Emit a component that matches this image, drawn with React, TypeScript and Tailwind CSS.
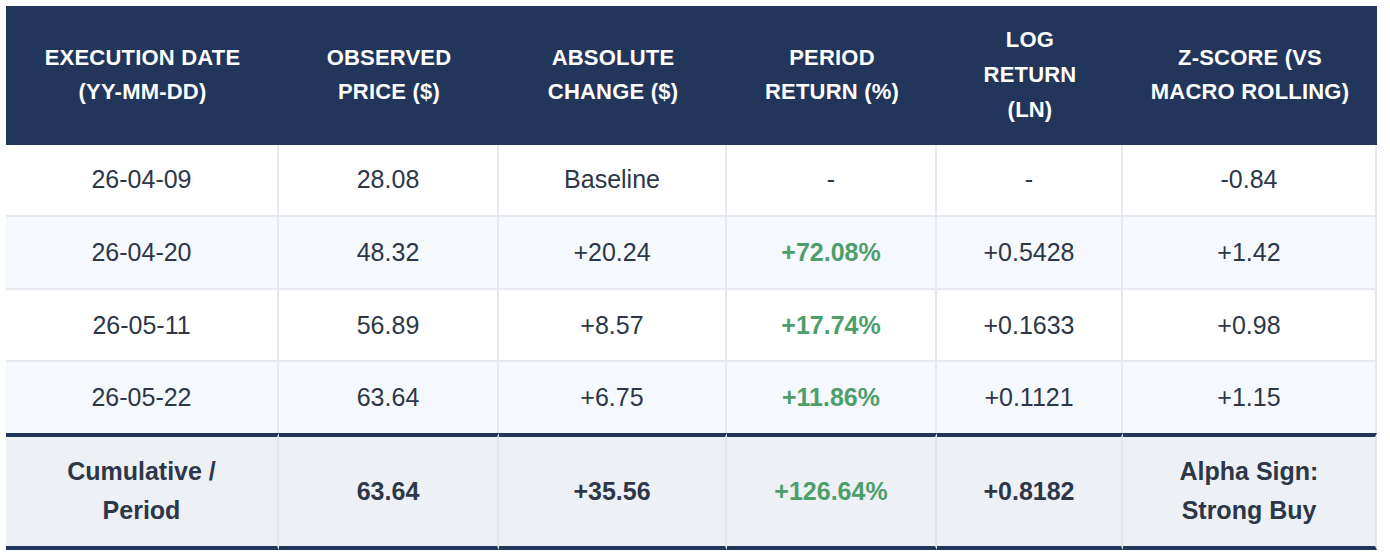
import React from "react";

const headers: string[][] = [
  ["EXECUTION DATE", "(YY-MM-DD)"],
  ["OBSERVED", "PRICE ($)"],
  ["ABSOLUTE", "CHANGE ($)"],
  ["PERIOD", "RETURN (%)"],
  ["LOG", "RETURN", "(LN)"],
  ["Z-SCORE (VS", "MACRO ROLLING)"],
];

const widths = [273, 220, 228, 210, 186, 254];

type Row = { date: string; price: string; change: string; ret: string; log: string; z: string; green: boolean };

const rows: Row[] = [
  { date: "26-04-09", price: "28.08", change: "Baseline", ret: "-", log: "-", z: "-0.84", green: false },
  { date: "26-04-20", price: "48.32", change: "+20.24", ret: "+72.08%", log: "+0.5428", z: "+1.42", green: true },
  { date: "26-05-11", price: "56.89", change: "+8.57", ret: "+17.74%", log: "+0.1633", z: "+0.98", green: true },
  { date: "26-05-22", price: "63.64", change: "+6.75", ret: "+11.86%", log: "+0.1121", z: "+1.15", green: true },
];

export default function App() {
  return (
    <div className="bg-white w-[1390px] h-[560px] pt-[6px] pl-[6px]" style={{ fontFamily: '"Liberation Sans", Arial, Helvetica, sans-serif' }}>
      <table className="table-fixed border-separate border-spacing-0 w-[1371px] text-[#2d3748]">
        <colgroup>
          {widths.map((w, i) => (
            <col key={i} style={{ width: w }} />
          ))}
        </colgroup>
        <thead>
          <tr className="bg-[#22355b]">
            {headers.map((h, i) => (
              <th
                key={i}
                className="px-3 py-[17.4px] text-white font-bold text-[22px] leading-[34.6px] tracking-[0.2px] text-center align-middle"
              >
                {h.map((line, j) => (
                  <div key={j}>{line}</div>
                ))}
              </th>
            ))}
          </tr>
        </thead>
        <tbody>
          {rows.map((r, i) => {
            const bg = i % 2 === 0 ? "bg-white" : "bg-[#f5f8fc]";
            const cell = `${bg} border-r-2 border-[#e6eaf0] px-3 py-[15.8px] text-[25px] leading-[39px] text-center align-middle ${i < rows.length - 1 ? "border-b-2" : ""}`;
            return (
              <tr key={i}>
                <td className={cell}>{r.date}</td>
                <td className={cell}>{r.price}</td>
                <td className={cell}>{r.change}</td>
                <td className={cell}>
                  {r.green ? <span className="font-bold text-[#4e9e6b]">{r.ret}</span> : r.ret}
                </td>
                <td className={cell}>{r.log}</td>
                <td className={cell}>{r.z}</td>
              </tr>
            );
          })}
          <tr>
            {[
              ["Cumulative /", "Period"],
              ["63.64"],
              ["+35.56"],
              ["+126.64%"],
              ["+0.8182"],
              ["Alpha Sign:", "Strong Buy"],
            ].map((c, i) => (
              <td
                key={i}
                className={`bg-[#edf0f5] border-t-4 border-b-4 border-t-[#22355b] border-b-[#22355b] border-r-2 border-r-[#e2e6ed] px-3 py-[15.4px] text-[25px] leading-[39px] font-bold text-center align-middle ${i === 3 ? "text-[#4e9e6b]" : "text-[#2d3748]"}`}
              >
                {c.map((l, j) => (
                  <div key={j}>{l}</div>
                ))}
              </td>
            ))}
          </tr>
        </tbody>
      </table>
    </div>
  );
}
